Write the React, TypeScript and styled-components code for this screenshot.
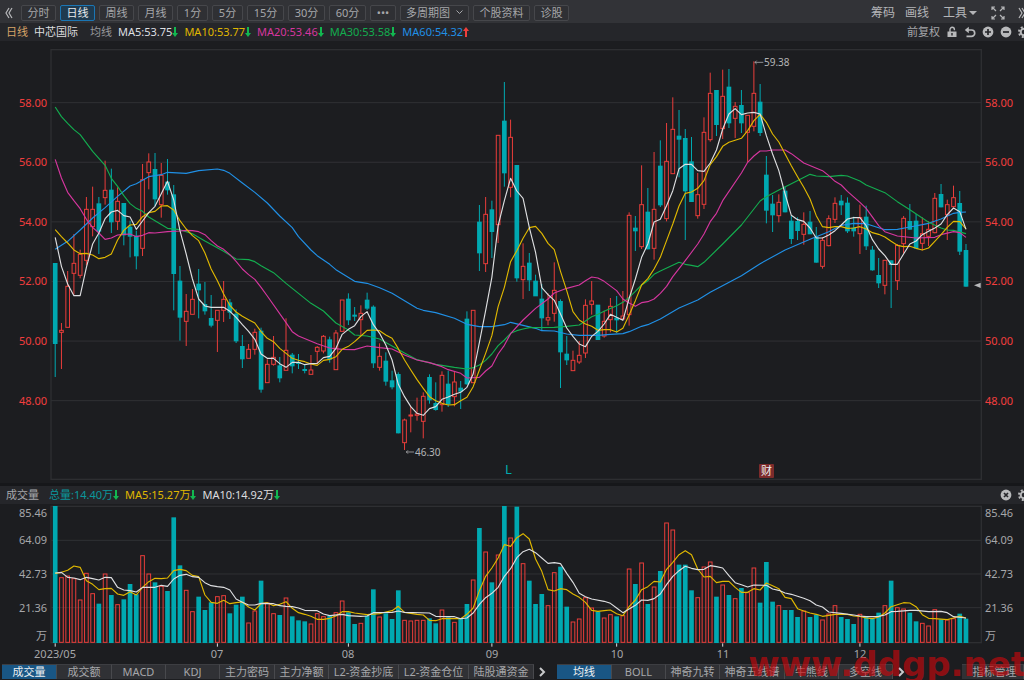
import React from "react";
import styled, { createGlobalStyle } from "styled-components";

const Global = createGlobalStyle`
  * { box-sizing: border-box; }
  body {
    margin: 0;
    background: #1c1d20;
    font-family: "Noto Sans", "Noto Sans CJK SC", sans-serif;
    font-size: 11px;
    line-height: 16px;
    color: #a6a7aa;
    overflow-x: hidden;
  }
  button { font: inherit; color: inherit; margin: 0; padding: 0; cursor: pointer; }
`;

const RED = "#ea3d3a";
const TEAL = "#00a9b1";
const GREEN = "#13ad4f";
const YELLOW = "#e0b800";
const MAGENTA = "#d6369f";
const BLUE = "#2090e6";
const WHITE = "#dedfe1";

const Page = styled.main`
  position: relative;
  overflow: hidden;
  background: #1c1d20;
`;

const Toolbar = styled.header`
  display: flex;
  align-items: center;
  height: 23px;
  padding: 2px 0 0 3px;
  background: #323337;
  overflow: hidden;
`;

const Periods = styled.nav`
  display: flex;
  gap: 4px;
  margin-left: 6px;
`;

const PeriodButton = styled.button<{ $w: number; $active?: boolean }>`
  display: flex;
  align-items: center;
  justify-content: center;
  gap: 6px;
  flex: none;
  width: ${(p) => p.$w}px;
  height: 16px;
  line-height: 14px;
  white-space: nowrap;
  border: 1px solid ${(p) => (p.$active ? "#1b76b4" : "#46474b")};
  border-radius: 2px;
  background: ${(p) => (p.$active ? "#1f3b50" : "#2f3034")};
  && { color: ${(p) => (p.$active ? "#e8eaec" : "#a6a7aa")}; }
`;

const IconButton = styled.button`
  display: flex;
  align-items: center;
  justify-content: center;
  flex: none;
  width: 12px;
  height: 16px;
  border: 0;
  background: none;
  && { color: #b8b9bb; }
`;

const Tools = styled.div`
  display: flex;
  align-items: center;
  flex: none;
  gap: 10px;
  margin: 0 -4px 0 auto;
`;

const ToolButton = styled.button`
  display: flex;
  align-items: center;
  gap: 2px;
  border: 0;
  background: none;
  white-space: nowrap;
  && { font-size: 12px; color: #b4b5b7; }
`;

const Spaced = styled.div`
  display: flex;
  gap: 11px;
  margin-left: 4px;
`;

const InfoBar = styled.div`
  display: flex;
  align-items: center;
  height: 18px;
  padding: 0 0 0 6px;
  background: #25262a;
  white-space: nowrap;
  overflow: hidden;
`;

const Label = styled.span<{ $c: string; $gap?: number }>`
  color: ${(p) => p.$c};
  margin-right: ${(p) => p.$gap ?? 6}px;
  display: inline-flex;
  align-items: center;
`;

const InfoTools = styled.div`
  display: flex;
  align-items: center;
  flex: none;
  gap: 6px;
  margin: 0 -6px 0 auto;
`;

const AdjustButton = styled(IconButton)`
  width: auto;
  && { color: #a6a7aa; }
`;

const Chart = styled.svg`
  display: block;
  width: 100%;
  height: auto;
`;

const AxisText = styled.text<{ $c: string; $size?: number }>`
  fill: ${(p) => p.$c};
  font-size: ${(p) => p.$size ?? 11}px;
`;

const Bottom = styled.footer`
  display: flex;
  align-items: flex-start;
  height: 16px;
  padding-left: 2px;
  background: #1c1d20;
  overflow: hidden;
`;

const Tabs = styled.nav`
  display: flex;
  flex: none;
  background: #303135;
`;

const Tab = styled.button<{ $w: number; $active?: boolean }>`
  flex: none;
  width: ${(p) => p.$w}px;
  height: 15px;
  line-height: 12px;
  padding-bottom: 1px;
  border: 0;
  border-top: 1px solid #3d3e42;
  border-right: 1px solid #48494d;
  white-space: nowrap;
  background: ${(p) => (p.$active ? "#195684" : "#303135")};
  && { color: ${(p) => (p.$active ? "#eef0f2" : "#a6a7aa")}; }
`;

const MoreButton = styled(IconButton)`
  width: 16px;
  margin-right: 7px;
`;

const ManageTab = styled(Tab)`
  margin-left: auto;
  padding-left: 4px;
`;

const Watermark = styled.div`
  position: absolute;
  right: -3px;
  bottom: -4px;
  height: 40px;
  line-height: 40px;
  font-family: "DejaVu Sans", sans-serif;
  font-weight: 700;
  font-size: 34px;
  color: rgba(205, 8, 12, 0.64);
  white-space: nowrap;
  pointer-events: none;
`;

/* ---------- data: chart units are thirds of a pixel ---------- */

const X0 = 165.6;
const STEP = 18.715;
const xAt = (i: number) => X0 + STEP * i;

// direction, high, body top, body bottom, low
const CANDLES = `
T658,658,899,999 R837,859,865,975 R681,727,850,850 R570,658,688,752 R617,631,694,703
R459,496,649,664 R428,496,548,577 T459,479,562,630 R350,439,461,482 T374,438,534,567
R430,472,532,558 T478,478,573,604 T530,549,577,640 T560,576,636,676 R360,407,613,636
R328,354,386,436 T327,376,465,487 R357,394,482,521 T345,414,438,452 T423,452,689,799
T666,711,820,890 R750,802,832,906 R735,766,811,811 T675,720,738,823 T714,781,801,812
T753,823,844,850 R799,799,829,924 R711,766,799,834 T765,776,805,825 T796,810,891,897
T873,907,945,972 R900,916,943,943 R854,865,916,932 T851,861,1036,1046 R946,961,1016,1016
R876,940,961,965 T939,965,1002,1015 R823,919,979,979 T927,933,966,988 T930,955,959,975
T962,976,980,988 R933,978,991,991 R906,910,922,961 R873,877,921,928 T878,887,946,956
R858,867,977,977 R768,768,862,862 T748,765,828,843 T789,813,817,831 R784,808,827,873
T746,768,793,798 T784,789,957,972 R898,937,970,980 T925,951,1012,1025 T980,1010,1029,1036
T985,991,1167,1168 R1124,1128,1196,1218 R1088,1113,1116,1165 R1061,1110,1114,1130 R1045,1057,1132,1183
T991,1000,1068,1079 T1015,1078,1097,1100 R982,994,1082,1103 T980,1020,1080,1089 R984,1014,1058,1087
T1011,1032,1042,1095 T802,825,1020,1022 R799,799,1016,1016 T483,534,627,681 R459,511,659,684
T470,497,563,642 R274,274,542,597 T114,231,387,428 R227,280,430,460 T364,364,702,713
R598,667,707,765 T627,657,708,741 T692,711,756,756 T720,765,822,861 R748,821,828,844
R655,739,808,833 T766,772,924,1032 T876,930,948,963 R920,949,980,980 R891,934,954,960
R766,784,927,942 R711,771,781,812 T783,783,887,887 R800,832,876,881 R762,787,827,865
T756,822,828,867 R741,816,825,826 R505,514,812,845 T516,552,561,621 R364,482,608,615
T432,504,615,616 R324,496,613,647 T289,366,483,489 R237,352,524,532 R160,256,389,389
T198,276,286,400 T255,283,441,588 T279,353,473,473 R387,452,515,524 R220,265,481,495
R86,148,287,293 T138,139,242,276 R77,157,254,285 T75,129,237,252 R174,187,223,282
T138,184,237,267 R214,214,265,354 R52,148,247,262 T120,174,266,276 T336,393,499,538
T453,480,513,564 R451,475,515,535 T428,441,504,505 T515,531,584,600 T520,532,560,588
R505,541,571,602 T501,534,570,570 T549,579,655,656 R580,589,667,674 R514,524,605,607
R460,478,526,537 T453,471,483,513 T460,477,561,567 T518,552,561,578 R482,521,569,630
T485,519,606,618 T606,618,678,680 T642,694,717,732 R649,649,724,751 T650,650,662,792
R600,604,710,738 R516,523,599,628 T480,532,556,557 T510,531,613,614 R520,569,598,619
R532,556,577,606 R447,463,566,568 T420,451,489,490 R467,482,512,588 R425,461,488,490
T441,478,622,633 T600,619,727,728`
  .trim()
  .split(/\s+/)
  .map((s) => {
    const [high, top, bottom, low] = s.slice(1).split(",").map(Number);
    return { up: s[0] === "R", high, top, bottom, low };
  });

const VOLUMES = `66,280,275,283,347,267,328,359,269,333,361,346,300,331,214,269,295,306,321,100,244,318,382,338,378,
355,337,334,388,362,338,416,380,290,356,388,393,341,397,409,412,419,388,397,395,385,350,385,420,417,395,316,398,
388,405,319,408,410,408,408,403,418,377,400,414,405,360,287,132,203,295,212,66,161,68,238,290,360,330,364,265,248,
368,413,404,340,371,383,401,391,397,394,254,300,236,360,308,261,116,137,242,242,319,340,248,233,338,302,333,343,
312,325,251,356,234,353,364,378,378,399,380,399,392,407,389,364,399,405,420,390,396,404,386,364,290,370,374,386,
412,417,425,376,406,407,403,389,404`
  .split(",")
  .map(Number);

const MA5 = `0:580 1:667 2:720 3:755 4:755 5:670 6:600 7:567 8:524 9:504 10:499 11:515 12:519 13:556 14:531 15:506
16:487 17:449 18:412 19:468 20:560 21:630 22:705 23:765 24:786 25:790 26:790 27:790 28:802 29:820 30:842 31:862 32:886
33:930 34:943 35:943 36:959 37:970 38:955 39:955 40:962 41:959 42:958 43:941 44:937 45:913 46:871 47:856 48:845 49:818
50:803 51:842 52:868 53:903 54:948 55:1021 56:1058 57:1088 58:1108 59:1114 60:1094 61:1088 62:1066 63:1059 64:1051
65:1045 66:1030 67:990 68:895 69:800 70:700 71:545 72:470 73:403 74:441 75:463 76:550 77:625 78:731 79:752 80:769
81:810 82:852 83:877 84:900 85:908 86:877 87:862 88:840 89:811 90:820 91:829 92:763 93:705 94:640 95:600 96:534 97:526
98:485 99:440 100:374 101:361 102:361 103:380 104:382 105:357 106:318 107:255 108:210 109:194 110:212 111:207 112:205
113:210 114:275 115:330 116:380 117:450 118:514 119:527 120:532 121:552 122:582 123:582 124:573 125:560 126:543 127:525
128:521 129:521 130:545 131:587 132:615 133:635 134:661 135:661 136:630 137:600 138:591 139:572 140:562 141:552 142:540
143:512 144:492 145:503 146:556`;

const MA10 = `0:557 1:578 2:597 3:618 4:629 5:628 6:633 7:644 8:640 9:630 10:588 11:559 12:543 13:541 14:518 15:506
16:502 17:486 18:485 19:498 20:530 21:555 22:575 23:590 24:627 25:675 26:710 27:750 28:784 29:804 30:817 31:827 32:837
33:863 34:883 35:893 36:913 37:928 38:943 39:949 40:953 41:960 42:964 43:949 44:946 45:938 46:916 47:907 48:893 49:876
50:859 51:858 52:860 53:873 54:883 55:914 56:948 57:978 58:1007 59:1033 60:1058 61:1070 62:1078 63:1083 64:1082
65:1070 66:1060 67:1028 68:978 69:928 70:875 71:788 72:730 73:653 74:620 75:583 76:551 77:547 78:568 79:598 80:617
81:682 82:740 83:803 84:828 85:840 86:847 87:859 88:857 89:857 90:864 91:853 92:813 93:770 94:723 95:704 96:675 97:640
98:590 99:540 100:486 101:448 102:444 103:433 104:410 105:362 106:338 107:307 108:295 109:289 110:283 111:260 112:230
113:211 114:235 115:270 116:294 117:330 118:365 119:398 120:430 121:465 122:515 123:548 124:551 125:548 126:548 127:553
128:552 129:548 130:555 131:566 132:571 133:579 134:592 135:604 136:608 137:607 138:613 139:618 140:612 141:592 142:572
143:550 144:532 145:533 146:555`;

const MA20 = `0:346 1:402 2:445 3:470 4:494 5:526 6:550 7:567 8:586 9:582 10:573 11:571 12:570 13:578 14:574 15:566
16:567 18:563 20:561 21:559 22:560 23:563 24:572 25:590 26:606 27:616 28:632 29:652 30:675 31:692 32:706 33:730 34:756
37:836 38:863 39:876 42:899 44:912 46:916 48:917 50:906 52:911 54:915 56:933 58:948 60:956 62:968 63:977 65:988 66:1002
68:1000 69:981 70:966 71:930 72:904 73:869 75:828 77:793 79:765 80:747 82:733 84:723 85:710 86:699 87:702 88:712 90:740
91:765 92:777 93:787 94:776 95:773 96:765 97:748 98:727 99:698 101:650 103:600 104:570 105:533 106:508 107:470 110:387
111:355 112:336 113:321 114:321 115:318 117:318 118:329 120:357 123:380 124:395 125:412 126:423 127:442 129:475 130:493
132:545 133:563 135:576 138:582 141:580 142:572 144:563 145:566 146:580`;

const MA30 = `0:189 1:218 2:238 3:257 4:272 6:322 8:364 9:403 10:427 11:455 12:479 13:493 14:502 15:519 18:553 20:557
22:569 24:591 27:622 29:645 31:647 32:653 33:665 35:686 37:718 39:748 41:778 43:801 45:837 47:858 48:873 50:876 52:885
54:906 56:927 58:947 61:961 64:970 66:975 67:971 68:963 69:949 70:930 71:905 72:888 73:868 74:860 75:855 76:851 80:850
82:847 84:843 85:831 86:818 87:811 88:802 90:785 91:775 92:760 93:742 94:723 95:710 96:691 97:681 100:655 101:661
102:664 103:668 104:655 107:600 110:543 113:471 114:458 116:438 118:419 121:391 122:396 124:398 126:394 127:396 129:411
130:423 133:446 135:473 137:497 140:535 142:552 143:558 144:559 146:569`;

const MA60 = `0:616 2:592 4:558 6:522 8:491 10:457 12:426 13:419 15:398 17:392 18:385 21:388 23:380 26:375 27:379
28:388 30:417 32:445 34:477 36:516 38:551 39:578 41:618 42:635 44:661 45:677 48:712 50:718 52:731 54:748 58:793 59:799
61:806 64:823 66:841 68:848 70:848 72:842 73:835 75:844 77:853 78:860 80:861 82:870 84:874 87:874 89:871 91:869 92:863
94:847 95:842 97:825 100:792 103:768 105:745 110:695 113:659 117:618 121:586 124:563 126:544 128:538 130:539 133:557
135:556 137:549 139:542 140:538 142:525 144:508 145:505 146:504`;

const VMA5 = `0:268 1:265 2:259 3:246 4:250 5:290 6:301 7:317 8:314 9:313 10:330 11:334 12:323 13:333 14:310 15:293
16:283 17:284 18:282 19:260 20:256 21:260 22:274 23:278 24:333 25:355 26:358 27:349 28:359 29:356 30:354 31:369 32:378
33:359 34:356 35:365 36:361 37:353 38:373 39:386 40:391 41:397 42:406 43:406 44:403 45:396 46:383 47:383 48:387 50:392
52:389 53:384 54:380 55:367 56:385 57:388 58:391 59:393 60:409 61:410 62:404 64:404 65:404 66:391 67:372 68:320 69:277
70:252 71:222 72:182 73:187 74:161 75:149 76:165 77:225 78:262 79:317 80:321 81:314 82:317 83:330 84:340 85:355 86:379
87:382 88:380 89:378 90:389 91:395 92:368 93:348 94:317 95:308 96:292 97:294 98:256 99:235 100:212 101:200 102:212
103:255 104:279 105:277 106:296 107:292 108:292 109:310 110:325 111:325 112:314 113:318 114:297 115:305 116:314 117:340
118:344 119:374 120:381 121:387 122:391 123:397 124:394 125:391 127:391 128:396 129:397 130:402 131:404 132:399 133:387
134:368 135:362 136:356 137:357 138:368 139:392 140:403 141:404 143:407 144:402 145:396 146:403`;

const VMA10 = `0:267 1:265 2:280 3:282 4:287 5:280 6:284 7:288 8:280 9:281 10:310 11:318 12:320 13:324 14:310 16:310
17:304 18:307 19:285 20:274 21:271 22:278 23:280 24:296 25:305 26:308 27:310 28:318 29:345 30:355 31:363 32:363 33:358
35:359 36:365 37:367 38:368 39:372 40:379 42:380 43:390 44:395 46:391 47:395 49:397 50:396 51:386 54:385 55:381 56:385
60:387 61:397 63:398 64:398 65:404 66:402 67:387 68:361 69:341 70:328 71:310 72:277 73:254 74:221 75:203 76:196 77:206
78:222 79:238 80:236 81:239 82:268 83:295 84:328 85:338 86:345 88:352 89:358 90:372 91:386 92:375 93:364 94:348 95:349
96:344 97:330 98:302 99:277 100:260 101:247 102:253 103:257 104:256 105:245 106:248 107:252 108:275 109:296 110:302
111:309 112:303 114:304 115:315 116:319 117:327 118:331 119:337 120:343 121:350 122:363 123:369 124:384 126:388 128:393
129:396 130:398 131:398 132:397 133:393 134:383 135:382 137:379 138:379 140:383 142:382 143:386 144:398 146:402`;

const path = (series: string) =>
  "M" +
  series
    .trim()
    .split(/\s+/)
    .map((p) => {
      const [i, y] = p.split(":").map(Number);
      return `${xAt(i).toFixed(1)} ${y}`;
    })
    .join("L");

const Line = ({ data, color }: { data: string; color: string }) => (
  <path d={path(data)} fill="none" stroke={color} strokeWidth={3.4} strokeLinejoin="round" />
);

const GRID = "#303134";
const FRAME = "#2e2f32";

/* ---------- icons ---------- */

const Arrow = ({ up }: { up?: boolean }) => (
  <svg width="6" height="10" viewBox="0 0 6 10" aria-hidden="true">
    <path
      d={up ? "M3 0L6 4H4V10H2V4H0Z" : "M3 10L6 6H4V0H2V6H0Z"}
      fill={up ? "#f0403c" : "#12b850"}
    />
  </svg>
);

const DoubleChevron = ({ right }: { right?: boolean }) => (
  <svg width="8" height="12" viewBox="0 0 8 12" fill="none" stroke="currentColor" strokeWidth="1.2" aria-hidden="true">
    <path d={right ? "M1 1L4 6L1 11M4 1L7 6L4 11" : "M4 1L1 6L4 11M7 1L4 6L7 11"} />
  </svg>
);

const Chevron = () => (
  <svg width="7" height="10" viewBox="0 0 7 10" fill="none" stroke="#c8c9cb" strokeWidth="2" aria-hidden="true">
    <path d="M1 1L5 5L1 9" />
  </svg>
);

const Gear = () => (
  <svg width="12" height="12" viewBox="0 0 12 12" fill="none" stroke="currentColor" aria-hidden="true">
    <circle cx="6" cy="6" r="3.3" strokeWidth="2" />
    <circle cx="6" cy="6" r="5" strokeWidth="2" strokeDasharray="2 1.93" />
  </svg>
);

const DISC = {
  plus: "M6 3V9M3 6H9",
  minus: "M3 6H9",
  close: "M4 4L8 8M8 4L4 8",
};

const Disc = ({ kind }: { kind: keyof typeof DISC }) => (
  <svg width="12" height="12" viewBox="0 0 12 12" aria-hidden="true">
    <circle cx="6" cy="6" r="5.4" fill="currentColor" />
    <path d={DISC[kind]} stroke="#25262a" strokeWidth="1.7" />
  </svg>
);

/* ---------- charts ---------- */

const PRICES = [58, 56, 54, 52, 50, 48];
const priceY = (p: number) => 176 + (58 - p) * 89.4;

const PriceChart = () => (
  <Chart viewBox="0 -3 1024 445" role="img" aria-label="中芯国际 日线">
    <rect x="0" y="439" width="1024" height="3" fill="#16171a" />
    <g transform="scale(0.33333)">
      {PRICES.map((p) => (
        <path key={p} d={`M153 ${priceY(p)}H2943`} stroke={GRID} strokeWidth={3} />
      ))}
      <rect x="153" y="17" width="2791" height="1289" fill="none" stroke={FRAME} strokeWidth={4} />
      {CANDLES.map((c, i) => {
        const x = xAt(i);
        return c.up ? (
          <g key={i} stroke={RED} strokeWidth={3} fill="none">
            <path d={`M${x} ${c.high}V${c.top}M${x} ${c.bottom}V${c.low}`} />
            <rect x={x - 5.5} y={c.top} width={11} height={c.bottom - c.top} />
          </g>
        ) : (
          <g key={i} fill={TEAL}>
            <rect x={x - 1.5} y={c.high} width={3} height={c.low - c.high} />
            <rect x={x - 7} y={c.top - 1} width={14} height={c.bottom - c.top + 2} />
          </g>
        );
      })}
      <Line data={MA60} color={BLUE} />
      <Line data={MA30} color={GREEN} />
      <Line data={MA20} color={MAGENTA} />
      <Line data={MA10} color={YELLOW} />
      <Line data={MA5} color={WHITE} />
      <g fill="none" stroke="#a6a7aa" strokeWidth={2.5}>
        <path d="M2264 55H2290M2270 50L2265 55L2270 60" />
        <path d="M1218 1224H1242M1224 1219L1219 1224L1224 1229" />
      </g>
      <path d="M2922 724L2942 716V732Z" fill="#b8b9bb" />
    </g>
    {PRICES.map((p) => (
      <g key={p}>
        <AxisText $c="#f23e3e" x="47" y={Math.round(priceY(p) / 3) + 4} textAnchor="end">
          {p.toFixed(2)}
        </AxisText>
        <AxisText $c="#f23e3e" x="985" y={Math.round(priceY(p) / 3) + 4}>
          {p.toFixed(2)}
        </AxisText>
      </g>
    ))}
    <AxisText $c="#b4b5b7" $size={10} x="764" y="22">59.38</AxisText>
    <AxisText $c="#b4b5b7" $size={10} x="415" y="412">46.30</AxisText>
    <AxisText $c={TEAL} $size={13} x="505" y="430">L</AxisText>
    <rect x="759" y="420" width="15" height="14" rx="1" fill="#7d2b2b" />
    <AxisText $c="#f0f0f0" x="761" y="431">财</AxisText>
  </Chart>
);

const MONTHS: [number, string][] = [
  [0, "2023/05"],
  [26, "07"],
  [47, "08"],
  [70, "09"],
  [90, "10"],
  [107, "11"],
  [129, "12"],
];

const VOLUME_LABELS: [number, string][] = [
  [33, "85.46"],
  [60, "64.09"],
  [94, "42.73"],
  [128, "21.36"],
  [156, "万"],
];

const VolumeChart = () => (
  <Chart viewBox="0 20 1024 160" role="img" aria-label="成交量">
    <g transform="scale(0.33333)">
      {[169, 270, 371].map((y) => (
        <path key={y} d={`M153 ${y}H2943`} stroke={GRID} strokeWidth={3} />
      ))}
      <rect x="153" y="67" width="2791" height="409" fill="none" stroke={FRAME} strokeWidth={4} />
      {VOLUMES.map((y, i) => {
        const x = xAt(i);
        return CANDLES[i].up ? (
          <rect key={i} x={x - 5.5} y={y + 1} width={11} height={474 - y} fill="none" stroke={RED} strokeWidth={3} />
        ) : (
          <rect key={i} x={x - 7} y={y} width={14} height={477 - y} fill={TEAL} />
        );
      })}
      <Line data={VMA5} color={YELLOW} />
      <Line data={VMA10} color={WHITE} />
      {MONTHS.map(([i]) => (
        <path key={i} d={`M${xAt(i)} 478V488`} stroke={WHITE} strokeWidth={3} />
      ))}
    </g>
    {VOLUME_LABELS.map(([y, label]) => (
      <g key={label}>
        <AxisText $c="#a6a7aa" x="47" y={y} textAnchor="end">{label}</AxisText>
        <AxisText $c="#a6a7aa" x="985" y={y}>{label}</AxisText>
      </g>
    ))}
    {MONTHS.map(([i, label]) => (
      <AxisText key={i} $c="#a6a7aa" x={Math.round(xAt(i) / 3)} y="174" textAnchor="middle">
        {label}
      </AxisText>
    ))}
  </Chart>
);

/* ---------- bars ---------- */

const PERIODS: [string, number][] = [
  ["分时", 35],
  ["日线", 35],
  ["周线", 35],
  ["月线", 35],
  ["1分", 31],
  ["5分", 31],
  ["15分", 37],
  ["30分", 37],
  ["60分", 37],
  ["•••", 26],
  ["多周期图", 69],
  ["个股资料", 57],
  ["诊股", 35],
];

const INDICATORS: [string, number][] = [
  ["成交量", 55],
  ["成交额", 55],
  ["MACD", 54],
  ["KDJ", 54],
  ["主力密码", 55],
  ["主力净额", 54],
  ["L2-资金抄底", 70],
  ["L2-资金仓位", 70],
  ["陆股通资金", 65],
];

const OVERLAYS: [string, number][] = [
  ["均线", 55],
  ["BOLL", 54],
  ["神奇九转", 54],
  ["神奇五线谱", 65],
  ["牛熊线", 54],
  ["多空线", 54],
];

export default function App() {
  return (
    <>
      <Global />
      <Page>
        <Toolbar>
          <IconButton aria-label="收起">
            <DoubleChevron />
          </IconButton>
          <Periods>
            {PERIODS.map(([name, w]) => (
              <PeriodButton key={name} $w={w} $active={name === "日线"}>
                {name}
                {name === "多周期图" && (
                  <svg width="7" height="5" viewBox="0 0 7 5" fill="none" stroke="currentColor" aria-hidden="true">
                    <path d="M0.5 0.5L3.5 3.5L6.5 0.5" />
                  </svg>
                )}
              </PeriodButton>
            ))}
          </Periods>
          <Tools>
            <ToolButton>筹码</ToolButton>
            <ToolButton>画线</ToolButton>
            <Spaced>
              <ToolButton>
                工具
                <svg width="8" height="4" viewBox="0 0 8 4" aria-hidden="true">
                  <path d="M0 0H8L4 4Z" fill="currentColor" />
                </svg>
              </ToolButton>
              <ToolButton aria-label="全屏">
                <svg width="18" height="14" viewBox="-3 0 18 14" fill="none" stroke="currentColor" strokeWidth="1.2" aria-hidden="true">
                  <path d="M1 4V1H4M1 1L5 5M10 1H13V4M13 1L9 5M1 10V13H4M1 13L5 9M10 13H13V10M13 13L9 9" />
                </svg>
              </ToolButton>
            </Spaced>
            <IconButton aria-label="展开">
              <DoubleChevron right />
            </IconButton>
          </Tools>
        </Toolbar>
        <InfoBar>
          <Label $c="#d6a468">日线</Label>
          <Label $c="#dcdddf" $gap={12}>中芯国际</Label>
          <Label $c="#97989b">均线</Label>
          <Label $c={WHITE}>MA5:53.75<Arrow /></Label>
          <Label $c={YELLOW}>MA10:53.77<Arrow /></Label>
          <Label $c={MAGENTA}>MA20:53.46<Arrow /></Label>
          <Label $c={GREEN}>MA30:53.58<Arrow /></Label>
          <Label $c={BLUE}>MA60:54.32<Arrow up /></Label>
          <InfoTools>
            <AdjustButton>前复权</AdjustButton>
            <IconButton aria-label="锁定">
              <svg width="10" height="12" viewBox="0 0 10 12" aria-hidden="true">
                <path d="M3 6V3.5A2.2 2.2 0 0 1 7.4 3.5V4.2" fill="none" stroke="currentColor" strokeWidth="1.4" />
                <path d="M0.5 5.5H9.5V11H0.5Z" fill="currentColor" />
                <path d="M5 7V9.5" stroke="#25262a" strokeWidth="1.4" />
              </svg>
            </IconButton>
            <IconButton aria-label="撤销">
              <svg width="12" height="12" viewBox="0 0 12 12" aria-hidden="true">
                <path d="M3 4H7.5A3.2 3.2 0 0 1 7.5 10.4H2.5" fill="none" stroke="currentColor" strokeWidth="1.7" />
                <path d="M4.8 0.8V7.2L0.8 4Z" fill="currentColor" />
              </svg>
            </IconButton>
            <IconButton aria-label="放大">
              <Disc kind="plus" />
            </IconButton>
            <IconButton aria-label="缩小">
              <Disc kind="minus" />
            </IconButton>
            <IconButton aria-label="设置">
              <Gear />
            </IconButton>
          </InfoTools>
        </InfoBar>
        <PriceChart />
        <InfoBar>
          <Label $c="#a6a7aa" $gap={10}>成交量</Label>
          <Label $c="#0b969c">总量:14.40万<Arrow /></Label>
          <Label $c={YELLOW}>MA5:15.27万<Arrow /></Label>
          <Label $c="#dcdddf">MA10:14.92万<Arrow /></Label>
          <InfoTools>
            <IconButton aria-label="关闭">
              <Disc kind="close" />
            </IconButton>
            <IconButton aria-label="设置">
              <Gear />
            </IconButton>
          </InfoTools>
        </InfoBar>
        <VolumeChart />
        <Bottom>
          <Tabs>
            {INDICATORS.map(([name, w]) => (
              <Tab key={name} $w={w} $active={name === "成交量"}>{name}</Tab>
            ))}
          </Tabs>
          <MoreButton aria-label="更多指标">
            <Chevron />
          </MoreButton>
          <Tabs>
            {OVERLAYS.map(([name, w]) => (
              <Tab key={name} $w={w} $active={name === "均线"}>{name}</Tab>
            ))}
          </Tabs>
          <MoreButton aria-label="更多均线">
            <Chevron />
          </MoreButton>
          <ManageTab $w={62}>指标管理</ManageTab>
        </Bottom>
        <Watermark>www.ddgp.net</Watermark>
      </Page>
    </>
  );
}
